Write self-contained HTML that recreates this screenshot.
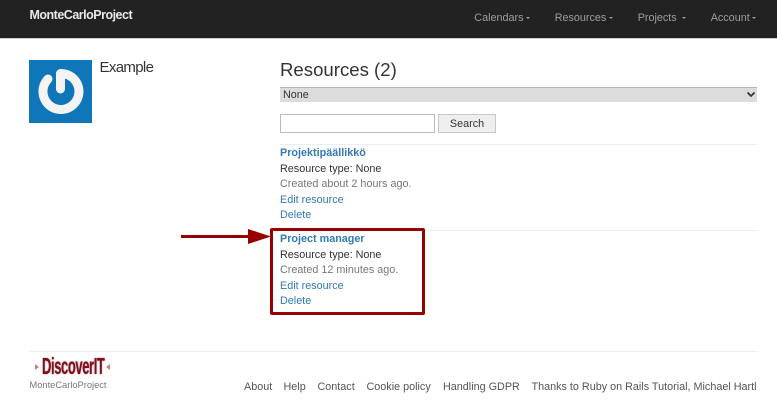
<!DOCTYPE html>
<html><head><meta charset="utf-8"><style>
*{box-sizing:border-box}
html,body{margin:0;padding:0;width:777px;height:407px;overflow:hidden;background:#fff;font-family:"Liberation Sans",sans-serif;font-size:10.8px;color:#333}
#p{position:absolute;left:0;top:0;width:777px;height:407px;filter:blur(.3px)}
.a{position:absolute;white-space:nowrap;line-height:16px}
a{color:#337ab7;text-decoration:none}
.nav{position:absolute;left:0;top:0;width:777px;height:39px;background:#222;border-bottom:1px solid #d0d0c8}
.n{color:#9d9d9d;font-size:10.8px;top:10px}
.c{position:absolute;top:17px;width:0;height:0;border-left:2.5px solid transparent;border-right:2.5px solid transparent;border-top:2.5px solid #9d9d9d}
.hr{position:absolute;height:1px;background:#eee}
.f{color:#555;font-size:10.8px;top:379px}
</style></head><body><div id="p">
<div class="nav"></div>
<div class="a" style="left:29.5px;top:7px;color:#e8e8e8;font-size:12.5px;font-weight:bold;letter-spacing:-.5px">MonteCarloProject</div>
<div class="a n" style="left:474.3px">Calendars</div><div class="c" style="left:526px"></div>
<div class="a n" style="left:554.7px">Resources</div><div class="c" style="left:609px"></div>
<div class="a n" style="left:637.7px">Projects</div><div class="c" style="left:681.7px"></div>
<div class="a n" style="left:710.7px">Account</div><div class="c" style="left:751.7px"></div>

<svg style="position:absolute;left:29px;top:60px" width="63" height="63" viewBox="0 0 63 63">
<rect width="63" height="63" fill="#0f76b9"/>
<path d="M19 19A18 18 0 1 0 31.500 13.500V29" fill="none" stroke="#f4f4f4" stroke-width="9" stroke-linecap="round" stroke-linejoin="round"/>
</svg>
<div class="a" style="left:99.5px;top:59px;font-size:15px;line-height:18px;letter-spacing:-.65px;color:#333">Example</div>

<div class="a" style="left:280px;top:58px;font-size:18.6px;line-height:24px;color:#333">Resources (2)</div>
<div style="position:absolute;left:280px;top:87px;width:477px;height:15px;background:#dcdcdc;border-top:1px solid #b4b4b4"></div>
<div class="a" style="left:283px;top:88px;font-size:10.800px;line-height:15px;color:#333">None</div>
<svg style="position:absolute;left:746px;top:91px" width="10" height="8" viewBox="0 0 10 8"><path d="M1.500 1.500L5 5L8.500 1.500" fill="none" stroke="#333" stroke-width="1.700"/></svg>

<div style="position:absolute;left:280px;top:114px;width:155px;height:19px;background:#fff;border:1px solid #bbb"></div>
<div style="position:absolute;left:438px;top:114px;width:58px;height:19px;background:#efefef;border:1px solid #c8c8c8;color:#333;font-size:10.800px;line-height:18px;text-align:center">Search</div>

<div class="hr" style="left:280px;top:144px;width:477px;background:#e8eef2"></div>
<div class="a" style="left:280px;top:145px;font-weight:bold;color:#337ab7">Projektipäällikkö</div>
<div class="a" style="left:280px;top:161px">Resource type: None</div>
<div class="a" style="left:280px;top:176px;color:#777">Created about 2 hours ago.</div>
<div class="a" style="left:280px;top:192px"><a>Edit resource</a></div>
<div class="a" style="left:280px;top:207px"><a>Delete</a></div>

<div class="hr" style="left:280px;top:230px;width:477px"></div>
<div class="a" style="left:280px;top:231px;font-weight:bold;color:#337ab7">Project manager</div>
<div class="a" style="left:280px;top:247px">Resource type: None</div>
<div class="a" style="left:280px;top:262px;color:#777">Created 12 minutes ago.</div>
<div class="a" style="left:280px;top:278px"><a>Edit resource</a></div>
<div class="a" style="left:280px;top:293px"><a>Delete</a></div>

<div style="position:absolute;left:270px;top:228px;width:155px;height:87px;border:3.500px solid #960000;border-radius:2px"></div>
<div style="position:absolute;left:181px;top:235px;width:70px;height:3px;background:#960000"></div>
<svg style="position:absolute;left:248px;top:228px" width="24" height="18" viewBox="0 0 24 18"><path d="M0 1L23 8.500L0 16Z" fill="#960000"/></svg>

<div class="hr" style="left:29px;top:351px;width:728px"></div>
<div class="a" style="left:42px;top:359px;font-weight:bold;font-size:13px;line-height:16px;color:#7a1020;letter-spacing:-.4px;transform:scaleY(1.800);transform-origin:0 50%;text-shadow:0 0 1px #a55">DiscoverIT</div>
<div style="position:absolute;left:35px;top:364px;width:0;height:0;border-top:3px solid transparent;border-bottom:3px solid transparent;border-left:4px solid #b88"></div>
<div style="position:absolute;left:106px;top:364px;width:0;height:0;border-top:3px solid transparent;border-bottom:3px solid transparent;border-right:4px solid #b88"></div>
<div class="a" style="left:29.500px;top:377px;font-size:9.300px;line-height:16px;color:#777">MonteCarloProject</div>
<div class="a f" style="left:244px">About</div>
<div class="a f" style="left:283.500px">Help</div>
<div class="a f" style="left:317.500px">Contact</div>
<div class="a f" style="left:366.500px">Cookie policy</div>
<div class="a f" style="left:443px">Handling GDPR</div>
<div class="a f" style="left:531.500px">Thanks to Ruby on Rails Tutorial, Michael Hartl</div>
</div></body></html>
